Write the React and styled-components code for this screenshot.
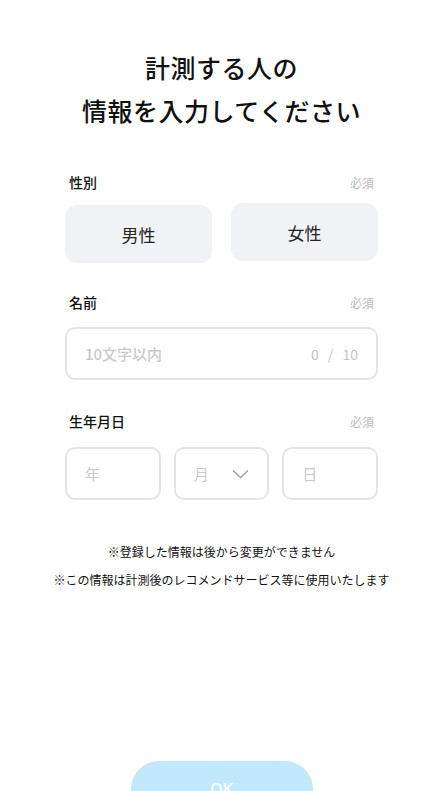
import styled, { createGlobalStyle } from 'styled-components';

const GlobalStyle = createGlobalStyle`
  body {
    margin: 0;
    background: #ffffff;
    font-family: 'Noto Sans CJK JP', 'Noto Sans', sans-serif;
    color: #111;
  }
`;

const Page = styled.div`
  width: 443px;
  height: 791px;
  overflow: hidden;
  box-sizing: border-box;
  padding: 46px 65px 0;
  display: flex;
  flex-direction: column;
`;

const Title = styled.h1`
  margin: 0 0 40px;
  font-size: 25px;
  font-weight: 500;
  line-height: 43px;
  text-align: center;
  letter-spacing: 0.5px;
`;

const Field = styled.div`
  display: flex;
  flex-direction: column;
  margin-bottom: ${(p) => p.$gap}px;
`;

const LabelRow = styled.div`
  display: flex;
  justify-content: space-between;
  align-items: center;
  height: 20px;
  padding: 0 4px;
  margin-bottom: ${(p) => p.$gap}px;
`;

const Label = styled.span`
  font-size: 14px;
  font-weight: 500;
`;

const Required = styled.span`
  font-size: 12px;
  color: #b9b9bd;
`;

const GenderRow = styled.div`
  display: grid;
  grid-template-columns: 1fr 1fr;
  gap: 19px;
`;

const GenderButton = styled.button`
  height: 58px;
  border: none;
  border-radius: 12px;
  background: #f1f2f6;
  font-family: inherit;
  font-size: 17px;
  color: #222;
  transform: translateY(${(p) => (p.$lift ? -2 : 0)}px);
`;

const Box = styled.div`
  height: 53px;
  box-sizing: border-box;
  border: 2px solid #e4e4e8;
  border-radius: 10px;
  display: flex;
  align-items: center;
  justify-content: space-between;
  padding: 0 18px;
`;

const Placeholder = styled.span`
  font-size: 15px;
  font-weight: ${(p) => (p.$bold ? 500 : 400)};
  color: #c9c9cc;
`;

const Counter = styled.span`
  font-size: 14px;
  color: #c4c4c8;
  word-spacing: 6px;
`;

const DateRow = styled.div`
  display: grid;
  grid-template-columns: repeat(3, 1fr);
  gap: 13px;
`;

const Notes = styled.div`
  margin: 38px -30px 0;
  text-align: center;
  font-size: 12px;
  line-height: 28px;
  color: #111;
`;

const OkButton = styled.button`
  align-self: center;
  margin-top: 167px;
  width: 182px;
  height: 56px;
  flex-shrink: 0;
  border: none;
  border-radius: 28px;
  background: #c2e8fb;
  color: #fff;
  font-family: 'Noto Sans', sans-serif;
  font-size: 16px;
  font-weight: 500;
`;

const Chevron = () => (
  <svg width='17' height='10' viewBox='0 0 17 10' fill='none'>
    <path d='M1 1.5L8.5 8.5L16 1.5' stroke='#9a9aa0' strokeWidth='1.3' />
  </svg>
);

const App = () => {
  return (
    <>
      <GlobalStyle />
      <Page>
        <Title>
          計測する人の
          <br />
          情報を入力してください
        </Title>

        <Field $gap={29}>
          <LabelRow $gap={13}>
            <Label>性別</Label>
            <Required>必須</Required>
          </LabelRow>
          <GenderRow>
            <GenderButton type='button'>男性</GenderButton>
            <GenderButton type='button' $lift>
              女性
            </GenderButton>
          </GenderRow>
        </Field>

        <Field $gap={31}>
          <LabelRow $gap={15}>
            <Label>名前</Label>
            <Required>必須</Required>
          </LabelRow>
          <Box>
            <Placeholder $bold>10文字以内</Placeholder>
            <Counter>0 / 10</Counter>
          </Box>
        </Field>

        <Field $gap={0}>
          <LabelRow $gap={16}>
            <Label>生年月日</Label>
            <Required>必須</Required>
          </LabelRow>
          <DateRow>
            <Box>
              <Placeholder>年</Placeholder>
            </Box>
            <Box>
              <Placeholder>月</Placeholder>
              <Chevron />
            </Box>
            <Box>
              <Placeholder>日</Placeholder>
            </Box>
          </DateRow>
        </Field>

        <Notes>
          ※登録した情報は後から変更ができません
          <br />
          ※この情報は計測後のレコメンドサービス等に使用いたします
        </Notes>

        <OkButton type='button'>OK</OkButton>
      </Page>
    </>
  );
};

export default App;
